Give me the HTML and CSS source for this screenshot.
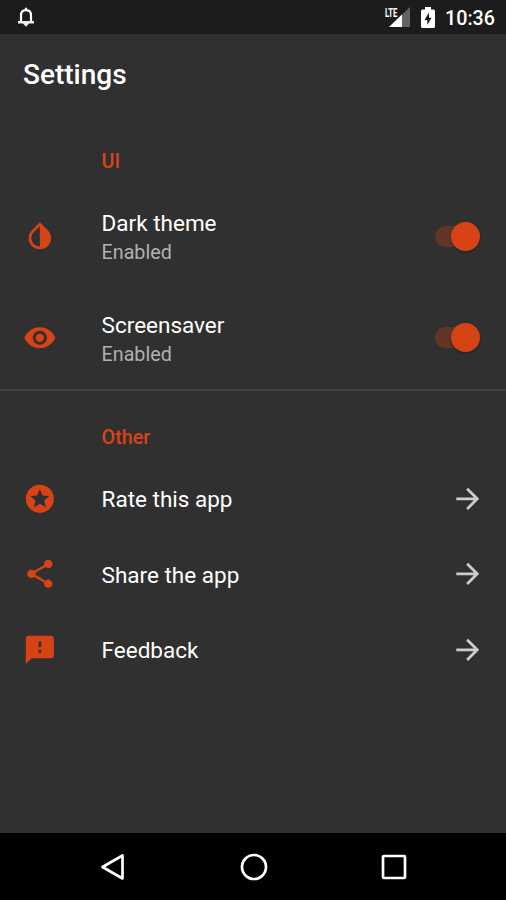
FILE: index.html
```html
<!DOCTYPE html>
<html lang="en">
<head>
<meta charset="utf-8">
<title>Settings</title>
<link rel="stylesheet" href="styles.css">
</head>
<body>
<div class="screen">
  <header class="status">
    <svg class="bell" viewBox="0 0 18 22"><path d="M4 16V9.500C4 6 6 4.200 9 4.200s5 1.800 5 5.300V16M9 4V1.700" fill="none" stroke="#fff" stroke-width="2.200"/><path d="M1 15h16v2.500H1zM6 17.500h6L9 20.800z" fill="#eee"/></svg>
    <div class="tray">
      <div class="network">
        <svg class="signal" viewBox="0 0 21 20"><path d="M0 20 21 0v20z" fill="#646464"/><path d="M0 20 13 7.600V20z" fill="#fff"/></svg>
        <span class="lte">LTE</span>
      </div>
      <svg class="battery" viewBox="0 0 14 21"><path d="M4 0h6v2.500h2.500Q14 2.500 14 4v15.500q0 1.500-1.500 1.500h-11Q0 21 0 19.500V4q0-1.500 1.500-1.500H4z" fill="#fff"/><path d="M8 5.500 3.500 13H6.300v5L10.500 10.800H8z" fill="#1c1c1c"/></svg>
      <span class="clock">10:36</span>
    </div>
  </header>
  <h1 class="title">Settings</h1>
  <main class="settings">
    <h2 class="section">UI</h2>
    <div class="row tall">
      <svg class="icon" viewBox="0 0 24 24"><path d="M17.660 7.930 12 2.270 6.340 7.930c-3.120 3.120-3.120 8.190 0 11.310C7.900 20.800 9.950 21.580 12 21.580s4.100-.78 5.660-2.340c3.120-3.120 3.120-8.190 0-11.310zM12 19.590c-1.600 0-3.110-.62-4.240-1.760C6.620 16.690 6 15.190 6 13.590s.62-3.110 1.760-4.240L12 5.100z"/></svg>
      <div class="text"><span class="label">Dark theme</span><span class="value">Enabled</span></div>
      <div class="switch"><i class="thumb"></i></div>
    </div>
    <div class="row tall">
      <svg class="icon" viewBox="0 0 24 24"><path d="M12 4.500C7 4.500 2.730 7.610 1 12c1.730 4.390 6 7.500 11 7.500s9.270-3.110 11-7.500c-1.730-4.390-6-7.500-11-7.500zM12 17c-2.760 0-5-2.240-5-5s2.240-5 5-5 5 2.240 5 5-2.240 5-5 5zm0-8c-1.660 0-3 1.340-3 3s1.340 3 3 3 3-1.340 3-3-1.340-3-3-3z"/></svg>
      <div class="text"><span class="label">Screensaver</span><span class="value">Enabled</span></div>
      <div class="switch"><i class="thumb"></i></div>
    </div>
    <h2 class="section other">Other</h2>
    <div class="row">
      <svg class="icon" viewBox="0 0 24 24"><path d="M11.990 2C6.470 2 2 6.480 2 12s4.470 10 9.990 10C17.520 22 22 17.520 22 12S17.520 2 11.990 2zm4.240 16L12 15.450 7.770 18l1.120-4.810-3.730-3.230 4.920-.42L12 5l1.920 4.530 4.920.42-3.730 3.230z"/></svg>
      <div class="text"><span class="label">Rate this app</span></div>
      <svg class="arrow" viewBox="0 0 24 24"><path d="M4.500 12h14M12.200 4.800l7.200 7.200-7.200 7.200"/></svg>
    </div>
    <div class="row">
      <svg class="icon" viewBox="0 0 24 24"><path d="M18 16.080c-.76 0-1.440.3-1.960.77L8.910 12.700c.05-.23.09-.46.09-.7s-.04-.47-.09-.7l7.050-4.110c.54.5 1.250.81 2.040.81 1.660 0 3-1.340 3-3s-1.340-3-3-3-3 1.340-3 3c0 .24.04.47.09.7L8.040 9.810C7.500 9.310 6.790 9 6 9c-1.660 0-3 1.340-3 3s1.340 3 3 3c.79 0 1.500-.31 2.040-.81l7.120 4.160c-.05.21-.08.43-.08.65 0 1.610 1.310 2.920 2.920 2.920s2.920-1.310 2.920-2.920-1.310-2.920-2.920-2.920z"/></svg>
      <div class="text"><span class="label">Share the app</span></div>
      <svg class="arrow" viewBox="0 0 24 24"><path d="M4.500 12h14M12.200 4.800l7.200 7.200-7.200 7.200"/></svg>
    </div>
    <div class="row">
      <svg class="icon" viewBox="0 0 24 24"><path d="M20 2H4c-1.100 0-1.990.9-1.990 2L2 22l4-4h14c1.100 0 2-.9 2-2V4c0-1.100-.9-2-2-2zm-7 12h-2v-2h2zm0-4h-2V6h2z"/></svg>
      <div class="text"><span class="label">Feedback</span></div>
      <svg class="arrow" viewBox="0 0 24 24"><path d="M4.500 12h14M12.200 4.800l7.200 7.200-7.200 7.200"/></svg>
    </div>
  </main>
  <nav class="nav">
    <svg viewBox="0 0 30 30"><path d="M4.500 15 24.500 3.500v23z"/></svg>
    <svg viewBox="0 0 30 30"><circle cx="15" cy="15" r="12"/></svg>
    <svg viewBox="0 0 30 30"><rect x="4" y="4" width="22" height="22" rx="1"/></svg>
  </nav>
</div>
</body>
</html>
```
FILE: styles.css
```css
* { box-sizing: border-box; }
body { margin: 0; background: #303030; font-family: Roboto, "Liberation Sans", sans-serif; color: #fff; }
.screen { display: flex; flex-direction: column; width: 506px; height: 900px; overflow: hidden; }
.status { display: flex; justify-content: space-between; height: 34px; background: #1c1c1c; padding: 6px 11px 0 17px; }
.bell { width: 18px; height: 22px; }
.tray { display: flex; }
.network { position: relative; width: 25px; height: 22px; display: flex; justify-content: flex-end; align-items: flex-end; margin-right: 11px; }
.signal { width: 21px; height: 20px; margin-bottom: 1px; }
.lte { position: absolute; left: 0; top: 1px; font-size: 12px; line-height: 12px; font-weight: 700; transform: scaleX(.64); transform-origin: 0 0; background: #1c1c1c; height: 11px; }
.battery { width: 14px; height: 21px; margin: 1px 10px 0 0; }
.clock { font-size: 19.700px; line-height: 25px; font-weight: 500; }
.title { margin: 0; height: 79px; padding: 0 23px; font-size: 28px; line-height: 82px; font-weight: 500; }
.settings { flex: 1; padding-top: 11px; }
.section { margin: 0; height: 62px; padding-left: 101.600px; font-size: 19.700px; line-height: 76px; font-weight: 500; color: #d84315; }
.other { height: 71.600px; border-top: 2px solid #424242; line-height: 93px; }
.row { display: flex; align-items: center; height: 75.500px; padding: 0 23px; }
.tall { height: 101.500px; }
.icon { width: 33.700px; height: 33.700px; fill: #d84315; margin-right: 45.400px; margin-left: -.500px; flex: none; }
.tall .icon { margin-top: -1px; }
.text { flex: 1; display: flex; flex-direction: column; padding-top: 2.500px; }
.label { font-size: 22.500px; line-height: 29px; white-space: nowrap; }
.tall .text { padding-top: 3px; }
.value { font-size: 19.700px; line-height: 29px; color: #b0b0b0; }
.arrow { width: 33.700px; height: 33.700px; fill: none; stroke: #ccc; stroke-width: 2; margin-right: -.500px; }
.switch { width: 40px; height: 21px; border-radius: 11px; background: #623626; display: flex; align-items: center; justify-content: flex-end; margin: -1px 8.500px 0 0; }
.thumb { width: 29px; height: 29px; flex: none; border-radius: 50%; background: #d84315; margin-right: -5px; box-shadow: 0 1px 2px #1b2524; }
.nav { display: flex; justify-content: center; align-items: center; gap: 110.500px; height: 67px; padding-left: 1px; background: #000; }
.nav svg { width: 30px; height: 30px; fill: none; stroke: #fff; stroke-width: 2.700; stroke-linejoin: round; }
```
